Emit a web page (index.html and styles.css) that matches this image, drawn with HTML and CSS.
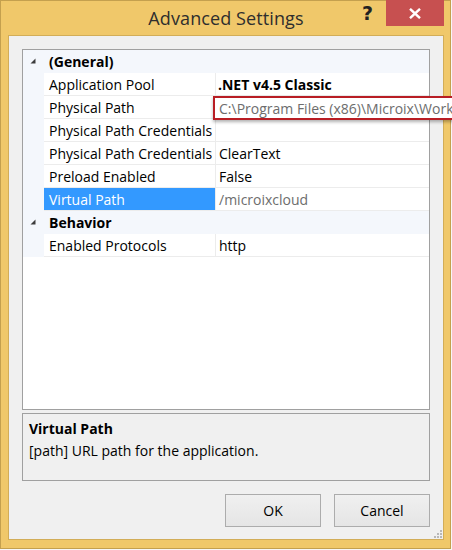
FILE: index.html
```html
<!DOCTYPE html>
<html>
<head>
<meta charset="utf-8">
<link rel="stylesheet" href="styles.css">
</head>
<body>
<div class="window">
  <div class="titlebar">
    <div></div>
    <div class="title">Advanced Settings</div>
    <div class="controls">
      <span class="help">?</span>
      <span class="close">
        <svg width="12" height="11" viewBox="0 0 12 11"><path d="M1 0.8 L11 10.2 M11 0.8 L1 10.2" stroke="#fff" stroke-width="2.4" fill="none"/></svg>
      </span>
    </div>
  </div>
  <div class="content">
    <div class="grid">
      <div class="row cat">
        <div class="margin"><svg class="tri" width="6" height="6" viewBox="0 0 6 6"><polygon points="5.5,0.5 5.5,5.5 0.5,5.5" fill="#3c3c3c"/></svg></div>
        <div class="cname">(General)</div>
      </div>
      <div class="row"><div class="margin"></div><div class="name">Application Pool</div><div class="value bold">.NET v4.5 Classic</div></div>
      <div class="row"><div class="margin"></div><div class="name">Physical Path</div><div class="value editing"><div class="editbox">C:\Program Files (x86)\Microix\WorkflowModules\</div></div></div>
      <div class="row"><div class="margin"></div><div class="name">Physical Path Credentials</div><div class="value"></div></div>
      <div class="row"><div class="margin"></div><div class="name">Physical Path Credentials</div><div class="value">ClearText</div></div>
      <div class="row"><div class="margin"></div><div class="name">Preload Enabled</div><div class="value">False</div></div>
      <div class="row"><div class="margin"></div><div class="name selected">Virtual Path</div><div class="value ro">/microixcloud</div></div>
      <div class="row cat">
        <div class="margin"><svg class="tri" width="6" height="6" viewBox="0 0 6 6"><polygon points="5.5,0.5 5.5,5.5 0.5,5.5" fill="#3c3c3c"/></svg></div>
        <div class="cname">Behavior</div>
      </div>
      <div class="row"><div class="margin"></div><div class="name">Enabled Protocols</div><div class="value">http</div></div>
    </div>
    <div class="desc">
      <div class="desc-title">Virtual Path</div>
      <div class="desc-text">[path] URL path for the application.</div>
    </div>
    <div class="buttons">
      <button class="btn">OK</button>
      <button class="btn">Cancel</button>
    </div>
    <svg class="grip" width="10" height="10" viewBox="0 0 10 10">
      <rect x="7" y="1" width="2" height="2" fill="#b8b8b8"/>
      <rect x="4" y="4" width="2" height="2" fill="#b8b8b8"/>
      <rect x="7" y="4" width="2" height="2" fill="#b8b8b8"/>
      <rect x="1" y="7" width="2" height="2" fill="#b8b8b8"/>
      <rect x="4" y="7" width="2" height="2" fill="#b8b8b8"/>
      <rect x="7" y="7" width="2" height="2" fill="#b8b8b8"/>
    </svg>
  </div>
</div>
</body>
</html>
```
FILE: styles.css
```css
html, body {
  margin: 0;
  padding: 0;
  overflow: hidden;
  background: #f7f7f7;
}
body {
  width: 452px;
  height: 550px;
  font-family: "Open Sans", "Noto Sans", sans-serif;
}
.window {
  width: 451px;
  height: 549px;
  box-sizing: border-box;
  border: 1px solid #c4a04e;
  background: #f0c86a;
  padding: 0 6px 8px 7px;
  display: flex;
  flex-direction: column;
}
.titlebar {
  height: 34px;
  display: grid;
  grid-template-columns: 1fr auto 1fr;
  align-items: start;
}
.title {
  font-size: 18px;
  color: #2e2e2e;
  padding-top: 4px;
  line-height: 26px;
  letter-spacing: 0.1px;
}
.controls {
  display: flex;
  justify-content: flex-end;
  align-items: flex-start;
}
.help {
  font-family: "DejaVu Sans", sans-serif;
  font-weight: bold;
  font-size: 19px;
  line-height: 24px;
  color: #222;
  margin-right: 13px;
}
.close {
  width: 58px;
  height: 26px;
  margin-top: -1px;
  background: #c75050;
  display: flex;
  align-items: center;
  justify-content: center;
}
.content {
  position: relative;
  flex: 1;
  border: 1px solid #d2ad58;
  background: #f0f0f0;
  padding: 13px 13px 12px 13px;
  display: flex;
  flex-direction: column;
  font-size: 14px;
}
.grid {
  height: 361px;
  box-sizing: border-box;
  border: 1px solid #a0a0a0;
  background: #fff;
  position: relative;
}
.row {
  display: grid;
  grid-template-columns: 21px 172px 1fr;
  height: 23px;
}
.row > div {
  height: 23px;
  box-sizing: border-box;
  padding-top: 1px;
  line-height: 22px;
  white-space: nowrap;
}
.row > .margin {
  padding-top: 0;
}
.margin {
  background: #f4f7fc;
  position: relative;
}
.tri {
  position: absolute;
  left: 7px;
  top: 8px;
}
.row.cat {
  background: #f4f7fc;
}
.cname {
  grid-column: 2 / 4;
  font-weight: bold;
  padding-left: 5px;
  color: #000;
}
.name {
  padding-left: 5px;
  border-right: 1px solid #ececec;
  border-bottom: 1px solid #ececec;
  color: #000;
}
.name.selected {
  background: #3399ff;
  color: #fff;
}
.value {
  padding-left: 3px;
  border-bottom: 1px solid #ececec;
  color: #000;
  position: relative;
}
.value.bold {
  font-weight: bold;
  padding-left: 2px;
}
.value.ro {
  color: #6d6d6d;
}
.editbox {
  position: absolute;
  left: -3px;
  top: 0;
  width: 250px;
  height: 24px;
  box-sizing: border-box;
  border: 2px solid #b81d24;
  background: #fff;
  color: #6d6d6d;
  padding-left: 4px;
  line-height: 21px;
  overflow: hidden;
  box-shadow: 0 2px 3px rgba(0,0,0,0.3);
  z-index: 5;
}
.desc {
  margin-top: 3px;
  height: 68px;
  box-sizing: border-box;
  border: 1px solid #a0a0a0;
  background: #f0f0f0;
  padding: 4px 6px;
  line-height: 22px;
  color: #000;
}
.desc-title {
  font-weight: bold;
}
.buttons {
  margin-top: 13px;
  display: flex;
  justify-content: flex-end;
  gap: 13px;
}
.btn {
  width: 96px;
  height: 33px;
  border: 1px solid #acacac;
  background: linear-gradient(#f0f0f0, #e5e5e5);
  font-family: "Open Sans", "Noto Sans", sans-serif;
  font-size: 14px;
  color: #000;
  padding: 0;
}
.grip {
  position: absolute;
  right: 0;
  bottom: 0;
}
```
